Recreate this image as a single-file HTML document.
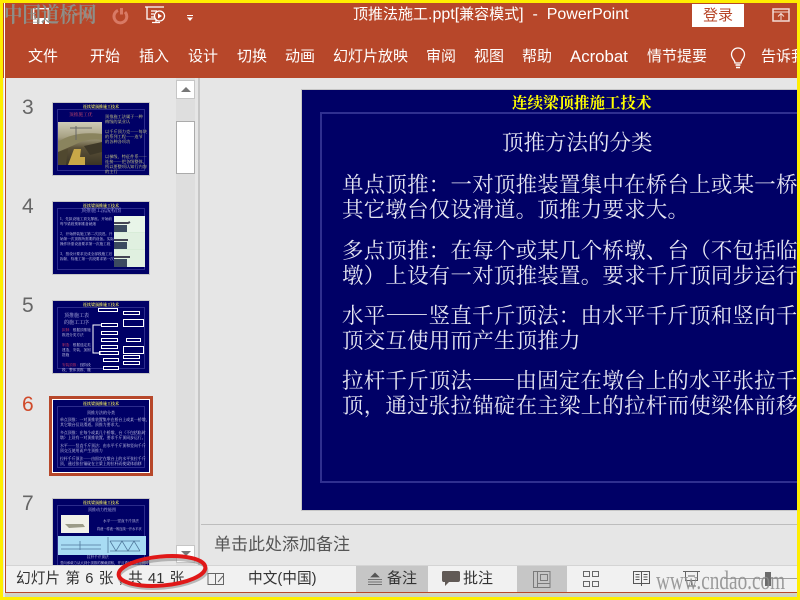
<!DOCTYPE html>
<html lang="zh"><head><meta charset="utf-8"><title>顶推法施工</title>
<style>
html,body{margin:0;padding:0;width:800px;height:600px;overflow:hidden;background:#e6e6e6}
*{box-sizing:border-box}
.a{position:absolute;white-space:nowrap}
body{font-family:"Liberation Sans","Noto Sans CJK SC",sans-serif;position:relative}
.tab{position:absolute;top:47px;color:#fff;font-size:15px;line-height:20px;white-space:nowrap}
.n{position:absolute;left:22px;font-size:21px;line-height:24px;color:#666;font-family:"Liberation Sans",sans-serif}
.th{position:absolute;left:52px;width:98px;background:#000066;border:1px solid #c6c6c6;overflow:hidden}
.th>*{filter:blur(.3px)}
.th .h{position:absolute;left:0;right:0;top:2px;text-align:center;color:#e6e060;font-size:4px;line-height:5px;font-weight:bold;font-family:"Noto Serif CJK SC",serif}
.th .f{position:absolute;left:4px;right:4px;top:6px;bottom:4px;border:1px solid #2c2c8c}
.th .t{position:absolute;color:#d8d8f0;font-size:3.6px;line-height:5px;white-space:nowrap;font-family:"Noto Serif CJK SC",serif}
.b{position:absolute;border:1px solid #fff;height:4px;background:#000066}
.l{position:absolute;left:342px;color:#e6e6f2;font-size:21.500px;letter-spacing:.2px;line-height:25px;white-space:nowrap;font-family:"Noto Serif CJK SC",serif}
.s{position:absolute;top:569px;font-size:15px;line-height:20px;color:#333;white-space:nowrap}
</style></head><body>
<!-- ribbon -->
<div class="a" style="left:0;top:0;width:800px;height:78px;background:#b7472a"></div>

<!-- QAT icons -->
<svg class="a" style="left:33px;top:8px" width="16" height="16" viewBox="0 0 16 16"><path d="M.7 15V.7h14.600V15" fill="none" stroke="#fff" stroke-width="1.300"/><rect x="0" y="10" width="16" height="6" fill="#fff"/><rect x="4" y="12" width="2" height="4" fill="#b7472a"/><rect x="10" y="12" width="2" height="4" fill="#b7472a"/></svg>
<svg class="a" style="left:72px;top:8px" width="28" height="16" viewBox="0 0 28 16"><path d="M3 7c6-3 12-2 15 2M18 3v6h-6" fill="none" stroke="#c9684f" stroke-width="2.500"/></svg>
<svg class="a" style="left:110px;top:6px" width="20" height="20" viewBox="0 0 20 20"><path d="M8 4.500a6.400 6.400 0 1 0 7 1.500M11.500 2v6.500" fill="none" stroke="#d87a65" stroke-width="3"/></svg>
<svg class="a" style="left:145px;top:6px" width="22" height="20" viewBox="0 0 22 20"><path d="M0 1h19M2 1v12h8M6 5h6M6 8h3M6 11h3M7 16.500h8M11 13v3" fill="none" stroke="#fff" stroke-width="1.300"/><circle cx="14.500" cy="10" r="5" fill="#b7472a" stroke="#fff" stroke-width="1.300"/><path d="M13 7.500l4 2.500-4 2.500z" fill="#fff"/></svg>
<svg class="a" style="left:186px;top:14px" width="8" height="8" viewBox="0 0 8 8"><path d="M1 1h6v1H1zM1 3.500h6L4 7z" fill="#fff"/></svg>

<!-- watermark -->
<div class="a" style="left:4px;top:0;font:bold 18.500px/24px 'Noto Serif CJK SC',serif;color:#8e8e88;transform:scaleY(1.150);transform-origin:0 0">中国道桥网</div>

<!-- title -->
<div class="a" style="left:353px;top:5px;color:#fff;font-size:15px;line-height:20px">顶推法施工<span style="font-size:16px">.ppt[</span>兼容模式<span style="font-size:16px">]&nbsp; -&nbsp; PowerPoint</span></div>
<div class="a" style="left:692px;top:4px;width:52px;height:23px;background:#fff;color:#b7472a;text-align:center;font-size:15px;line-height:24px">登录</div>
<svg class="a" style="left:772px;top:8px" width="18" height="14" viewBox="0 0 18 14"><rect x="1" y="1" width="16" height="12" fill="none" stroke="#f3dcd5" stroke-width="1.500"/><path d="M1 4h16M6 8.500l3-3 3 3M9 6v6" fill="none" stroke="#f3dcd5"/></svg>

<!-- tabs -->
<div class="tab" style="left:28px">文件</div>
<div class="tab" style="left:90px">开始</div>
<div class="tab" style="left:139px">插入</div>
<div class="tab" style="left:188px">设计</div>
<div class="tab" style="left:237px">切换</div>
<div class="tab" style="left:285px">动画</div>
<div class="tab" style="left:333px">幻灯片放映</div>
<div class="tab" style="left:426px">审阅</div>
<div class="tab" style="left:474px">视图</div>
<div class="tab" style="left:522px">帮助</div>
<div class="tab" style="left:570px;font-size:16.800px">Acrobat</div>
<div class="tab" style="left:647px">情节提要</div>
<svg class="a" style="left:728px;top:47px" width="20" height="22" viewBox="0 0 20 22"><path d="M7 16c0-3-3.500-4.500-3.500-8.500a6.500 6.500 0 0 1 13 0c0 4-3.500 5.500-3.500 8.500z" fill="none" stroke="#fff" stroke-width="1.300"/><path d="M7.500 18h5M8 20.500h4" stroke="#fff" stroke-width="1.500"/></svg>
<div class="tab" style="left:761px">告诉我</div>

<!-- left thumbnails -->
<div class="a" style="left:5px;top:78px;width:171px;height:487px;background:#e6e6e6;overflow:hidden"></div>
<div class="a" style="left:176px;top:78px;width:19px;height:487px;background:#dedede"></div>
<div class="a" style="left:195px;top:78px;width:3px;height:487px;background:#e6e6e6"></div>
<div class="a" style="left:198px;top:78px;width:2px;height:487px;background:#c6c6c6"></div>
<div class="a" style="left:176px;top:80px;width:19px;height:19px;background:#fff;border:1px solid #c6c6c6"></div>
<div class="a" style="left:181px;top:87px;width:0;height:0;border-left:5px solid transparent;border-right:5px solid transparent;border-bottom:5px solid #777"></div>
<div class="a" style="left:176px;top:121px;width:19px;height:53px;background:#fff;border:1px solid #ababab"></div>
<div class="a" style="left:176px;top:545px;width:19px;height:18px;background:#fff;border:1px solid #c6c6c6"></div>
<div class="a" style="left:181px;top:551px;width:0;height:0;border-left:5px solid transparent;border-right:5px solid transparent;border-top:5px solid #777"></div>

<div class="n" style="top:96px">3</div>
<div class="th" style="top:102px;height:74px"><div class="h">连续梁顶推施工技术</div><div class="f"></div>
<div class="t" style="left:16px;top:10px;color:#d04a6a;font-size:4.700px">顶推施工优</div>
<svg style="position:absolute;left:5px;top:19px" width="44" height="43"><defs><linearGradient id="g" x1="0" y1="0" x2="0" y2="1"><stop offset="0" stop-color="#cfcbb8"/><stop offset=".35" stop-color="#a8a284"/><stop offset=".6" stop-color="#5c5238"/><stop offset="1" stop-color="#3a3426"/></linearGradient></defs><rect width="44" height="43" fill="url(#g)"/><path d="M0 20c12-8 26-10 44-8v6c-14-2-22 2-30 6l-14 6z" fill="#8a845e"/><path d="M16 27h7l-1 8h5v8H10z" fill="#c8a848"/><path d="M26 24l18-4v10l-12 3z" fill="#3e3828"/><path d="M0 30l10-3-2 16H0z" fill="#50482f"/><path d="M12 6h22M18 4v14" stroke="#666" fill="none"/></svg>
<div class="t" style="left:52px;top:12px;color:#dcdc88;font-size:4.200px;line-height:5px">顶推施工法属于一种<br>梅级的某业认<br><br>以千斤顶力克——每块<br>的系列工程——连节<br>的各种各项功<br><br><br>以梯级、特征件系——<br>连接——把各级整体&#xFF0C;<br>所以要整项认知行内容<br>的主行</div>
</div>

<div class="n" style="top:195px">4</div>
<div class="th" style="top:201px;height:74px"><div class="h">连续梁顶推施工技术</div><div class="f"></div>
<div class="t" style="left:0;right:0;top:6px;text-align:center;font-size:5px;color:#b0b0e8">顶推施工法流程图</div>
<div class="t" style="left:7px;top:15px">1、先拟设施工顶支撑座。开始前<br>每节梁段预制准备就绪<br><br>2、开始拼装施工第二次顶进。开<br>始第一次顶推所需要的设备。实际<br>操作所需设备要求第一次施工段<br><br>3、按设计要求完成全部段施工后<br>拆除、待施工第一次段要求第一次</div>
<svg style="position:absolute;left:61px;top:14px" width="31" height="51"><rect width="31" height="51" fill="#d8ecd8"/><rect y="0" width="31" height="16" fill="#e8f5e8"/><rect y="17" width="31" height="16" fill="#e0f0e0"/><rect y="34" width="31" height="17" fill="#e0f0e0"/><path d="M0 7h14l2-1M0 24h14M0 41h16" stroke="#445" stroke-width="2"/><rect x="0" y="9" width="13" height="7" fill="#3c4a60"/><rect x="0" y="26" width="13" height="7" fill="#3c4a60"/><rect x="0" y="43" width="13" height="8" fill="#3c4a60"/></svg>
</div>

<div class="n" style="top:294px">5</div>
<div class="th" style="top:300px;height:74px"><div class="h">连续梁顶推施工技术</div><div class="f"></div>
<div class="t" style="left:11px;top:11px;font-size:5px;line-height:7px;color:#c0c0ec">顶推施工表<br>的施工工序</div>
<div class="t" style="left:9px;top:27px;line-height:5px"><span style="color:#e04060">拟制&#xFF1A;</span>根据顶推施<br>推进分类方法<br><br><span style="color:#e04060">制造&#xFF1A;</span>根据选定类<br>建造、安装、加固<br>措施<br><br><span style="color:#e04060">安装顶推&#xFF1A;</span>按阶段<br>段、整体顶推、撤<br>除支承支架</div>
<div class="b" style="left:45px;top:7px;width:20px"></div><div class="b" style="left:70px;top:10px;width:17px"></div><div class="b" style="left:70px;top:18px;width:21px;height:8px"></div>
<div class="b" style="left:48px;top:22px;width:17px"></div><div class="b" style="left:48px;top:30px;width:17px"></div><div class="b" style="left:48px;top:37px;width:17px"></div><div class="b" style="left:73px;top:37px;width:15px"></div><div class="b" style="left:48px;top:44px;width:17px"></div><div class="b" style="left:46px;top:50px;width:20px"></div><div class="b" style="left:70px;top:45px;width:21px;height:8px"></div><div class="b" style="left:70px;top:54px;width:17px"></div><div class="b" style="left:50px;top:57px;width:16px"></div><div class="b" style="left:70px;top:60px;width:17px"></div><div class="b" style="left:50px;top:65px;width:16px"></div>
<svg style="position:absolute;left:0;top:0" width="98" height="74"><path d="M48 24H40V52H48" fill="none" stroke="#fff"/></svg>
</div>

<div class="n" style="top:393px;color:#d04a2a">6</div>
<div class="a" style="left:49px;top:396px;width:104px;height:80px;background:#b7472a;padding:3px"><div style="position:relative;width:98px;height:74px;background:#000066;border:1px solid #fff;filter:blur(.25px)">
<div class="a" style="left:0;right:0;top:2px;text-align:center;color:#e6e060;font-size:4px;line-height:5px;font-weight:bold;font-family:'Noto Serif CJK SC',serif">连续梁顶推施工技术</div>
<div class="a" style="left:4px;right:4px;top:6px;bottom:4px;border:1px solid #2c2c8c"></div>
<div class="a" style="left:0;right:0;top:10px;text-align:center;color:#d8d8f0;font-size:4px;line-height:6px;font-family:'Noto Serif CJK SC',serif">顶推方法的分类</div>
<div class="a" style="left:7px;top:18px;color:#d8d8f0;font-size:3.900px;line-height:5px;font-family:'Noto Serif CJK SC',serif">单点顶推&#xFF1A;一对顶推装置集中在桥台上或某一桥墩&#xFF0C;<br>其它墩台仅设滑道。顶推力要求大。<br><div style="height:3px"></div>多点顶推&#xFF1A;在每个或某几个桥墩、台&#xFF08;不包括临时<br>墩&#xFF09;上设有一对顶推装置。要求千斤顶同步运行。<br><div style="height:3px"></div>水平——竖直千斤顶法&#xFF1A;由水平千斤顶和竖向千斤<br>顶交互使用而产生顶推力<br><div style="height:3px"></div>拉杆千斤顶法——由固定在墩台上的水平张拉千斤<br>顶&#xFF0C;通过张拉锚碇在主梁上的拉杆而使梁体前移</div>
</div></div>

<div class="n" style="top:492px">7</div>
<div class="th" style="top:498px;height:67px;border-bottom:0"><div class="h">连续梁顶推施工技术</div><div class="f" style="bottom:-4px"></div>
<div class="t" style="left:35px;top:9px;font-size:4px;color:#c8c8f0">顶推动力性能图</div>
<svg style="position:absolute;left:8px;top:16px" width="28" height="18"><rect width="28" height="18" fill="#f0f0e8"/><path d="M4 9h18l2 3-16 1z" fill="#9c9c88"/></svg>
<div class="t" style="left:50px;top:20px">水平——竖直千斤顶法</div>
<div class="t" style="left:44px;top:27px;font-size:3.200px">将液一将液一般连续一开水平状</div>
<svg style="position:absolute;left:5px;top:37px" width="88" height="19"><rect width="88" height="19" fill="#a8dcf4"/><path d="M3 9h40M22 5v9M3 13h40M52 5h30M52 5l6 10 6-10 6 10 6-10 6 10M52 15h30M50 1v16" fill="none" stroke="#50789c" stroke-width=".8"/></svg>
<div class="t" style="left:34px;top:56px">拉杆千斤顶法</div>
<div class="t" style="left:7px;top:61px;font-size:3.400px">竖向承载力从大到小顶推的横截面积&#xFF0C;并且通过顶推力使其</div>
</div>

<!-- main area -->
<div class="a" style="left:200px;top:78px;width:597px;height:446px;background:#e6e6e6"></div>
<div class="a" style="left:301px;top:89px;width:496px;height:422px;background:#000066;border-left:1px solid #c6c6c6;border-top:1px solid #c6c6c6;border-bottom:1px solid #c6c6c6;overflow:hidden"></div>
<div class="a" style="left:320px;top:112px;width:477px;height:371px;border:2px solid #2f2f90;border-right:0"></div>
<div class="a" style="left:512px;top:92px;color:#ffff00;font-size:15.500px;line-height:20px;font-weight:bold;font-family:'Noto Serif CJK SC',serif">连续梁顶推施工技术</div>
<div class="a" style="left:502px;top:128px;color:#e6e6f2;font-size:21.500px;line-height:27px;font-family:'Noto Serif CJK SC',serif">顶推方法的分类</div>
<div style="position:absolute;left:0;top:0;width:797px;height:600px;overflow:hidden">
<div class="l" style="top:171px">单点顶推&#xFF1A;一对顶推装置集中在桥台上或某一桥墩&#xFF0C;</div>
<div class="l" style="top:196px">其它墩台仅设滑道。顶推力要求大。</div>
<div class="l" style="top:237px">多点顶推&#xFF1A;在每个或某几个桥墩、台&#xFF08;不包括临时</div>
<div class="l" style="top:262px">墩&#xFF09;上设有一对顶推装置。要求千斤顶同步运行。</div>
<div class="l" style="top:302px">水平——竖直千斤顶法&#xFF1A;由水平千斤顶和竖向千斤</div>
<div class="l" style="top:327px">顶交互使用而产生顶推力</div>
<div class="l" style="top:367px">拉杆千斤顶法——由固定在墩台上的水平张拉千斤</div>
<div class="l" style="top:392px">顶&#xFF0C;通过张拉锚碇在主梁上的拉杆而使梁体前移</div>
</div>

<!-- notes -->
<div class="a" style="left:201px;top:524px;width:596px;height:1px;background:#bdbdbd"></div>
<div class="a" style="left:214px;top:533px;font-size:17px;line-height:23px;color:#555">单击此处添加备注</div>

<!-- status bar -->
<div class="a" style="left:5px;top:565px;width:792px;height:27px;background:#f1f1f1;border-top:1px solid #d4d4d4"></div>
<div class="a" style="left:356px;top:566px;width:72px;height:26px;background:#c6c6c6"></div>
<div class="a" style="left:517px;top:566px;width:50px;height:26px;background:#c6c6c6"></div>
<div class="s" style="left:16px;font-size:14.700px;word-spacing:1.200px">幻灯片 第 6 张 , 共 41 张</div>
<svg class="a" style="left:207px;top:572px" width="18" height="14" viewBox="0 0 18 14"><path d="M8.500 1.500H1v11h7.500zM8.500 1.500h8v11h-8M11 10l5-6" fill="none" stroke="#666"/></svg>
<div class="s" style="left:248px;font-size:14.700px">中文(中国)</div>
<svg class="a" style="left:368px;top:572px" width="14" height="14" viewBox="0 0 14 14"><path d="M7 1l4 4H3zM0 7.500h14M0 10h14M0 12.500h14" fill="#555" stroke="#555" stroke-width=".7"/></svg>
<div class="s" style="left:387px">备注</div>
<svg class="a" style="left:441px;top:570px" width="20" height="18" viewBox="0 0 20 18"><path d="M2 1h15a2 2 0 0 1 2 1v8a2 2 0 0 1-2 2H8l-4 4v-4H2a2 2 0 0 1-1-2V2a2 2 0 0 1 1-1z" fill="#615a56"/></svg>
<div class="s" style="left:463px">批注</div>
<svg class="a" style="left:533px;top:571px" width="18" height="17" viewBox="0 0 18 17"><path d="M.5.500h16.500v16H.500zM4.500.500v12h12.500M4.500 12.500v4M7.500 3.500h7v6h-7z" fill="none" stroke="#7b7b7b"/></svg>
<svg class="a" style="left:583px;top:571px" width="16" height="16" viewBox="0 0 16 16"><path d="M.5.500h6v5h-6zM9.500.500h6v5h-6zM.5 10.500h6v5h-6zM9.500 10.500h6v5h-6z" fill="none" stroke="#666"/></svg>
<svg class="a" style="left:633px;top:570px" width="17" height="17" viewBox="0 0 17 17"><path d="M.5 1.500h16v12H.5zM8.500 1.500V16M2.500 4.500h4M2.500 7h4M2.500 9.500h4M10.500 4.500h4M10.500 7h4M10.500 9.500h4" fill="none" stroke="#555"/></svg>
<svg class="a" style="left:683px;top:571px" width="17" height="17" viewBox="0 0 17 17"><path d="M0 .500h17M2.500 .500v9h12v-9M5 5h7M8.500 9.500V14M4 15h9" fill="none" stroke="#666"/></svg>
<div class="a" style="left:724px;top:578px;width:73px;height:1px;background:#a0a0a0"></div>
<div class="a" style="left:765px;top:572px;width:6px;height:14px;background:#6b6b6b"></div>
<!-- bottom edge -->
<div class="a" style="left:5px;top:592px;width:792px;height:1px;background:#b7472a"></div>
<div class="a" style="left:5px;top:593px;width:792px;height:4px;background:linear-gradient(#d8d4c8,#c8d4c0)"></div>
<div class="a" style="left:4px;top:3px;width:1px;height:590px;background:#fff"></div>
<div class="a" style="left:5px;top:78px;width:1px;height:515px;background:#b7472a"></div>
<div class="a" style="left:656px;top:564px;font:26px/34px 'Liberation Serif',serif;color:#8c8c8c;transform:scaleX(.74);transform-origin:0 0;opacity:.85">www.cndao.com</div>

<!-- red ellipse -->
<svg class="a" style="left:105px;top:545px" width="115" height="55" viewBox="0 0 115 55"><ellipse cx="58" cy="29" rx="44" ry="14" transform="rotate(-5 58 29)" fill="none" stroke="#888" stroke-width="3" opacity=".55"/><ellipse cx="57" cy="26" rx="43.500" ry="14.500" transform="rotate(-5 57 26)" fill="none" stroke="#e01818" stroke-width="4"/></svg>

<!-- yellow frame -->
<div class="a" style="left:0;top:0;width:800px;height:3px;background:#ffee00"></div>
<div class="a" style="left:0;top:0;width:3px;height:600px;background:#ffee00"></div>
<div class="a" style="left:797px;top:0;width:3px;height:600px;background:#ffee00"></div>
<div class="a" style="left:0;top:597px;width:800px;height:3px;background:#ffee00"></div>
</body></html>
